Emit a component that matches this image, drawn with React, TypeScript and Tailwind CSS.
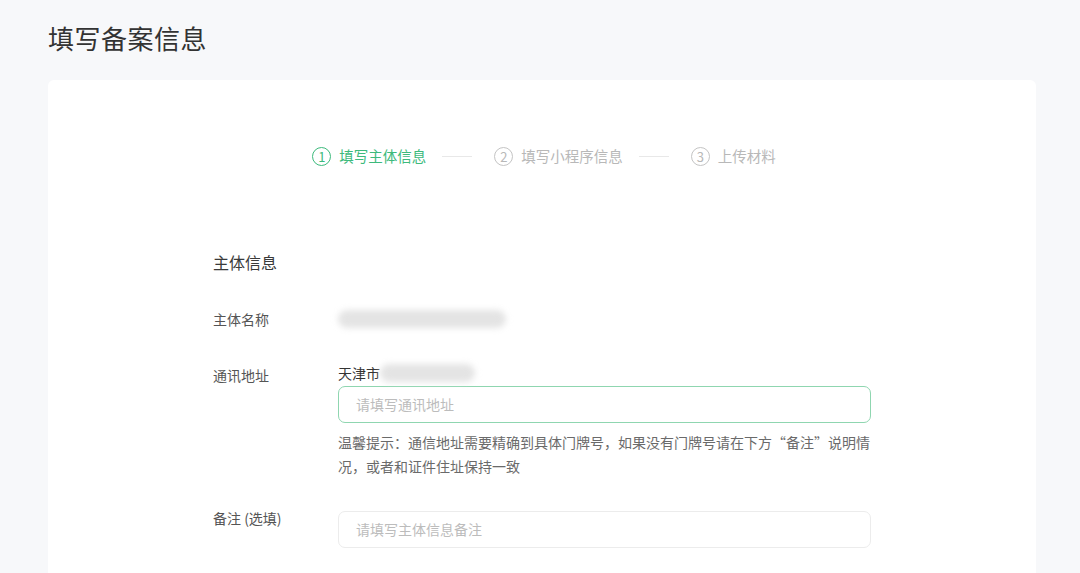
const font = { fontFamily: '"Noto Sans CJK SC", "Noto Sans", sans-serif' };

function Step({ n, label, active }: { n: string; label: string; active?: boolean }) {
  return (
    <div className={`flex items-center gap-[8px] ${active ? 'text-[#3dba7c]' : 'text-[#b8b8b8]'}`}>
      <span
        className={`w-[19px] h-[19px] rounded-full border-[1.5px] flex items-center justify-center text-[13px] leading-none ${
          active ? 'border-[#3dba7c]' : 'border-[#c4c4c4]'
        }`}
      >
        {n}
      </span>
      <span className="text-[14.5px] leading-[20px]">{label}</span>
    </div>
  );
}

function Line() {
  return <div className="w-[30px] h-px bg-[#e8e8e8] ml-[16px] mr-[22px]" />;
}

function Blur({ w }: { w: number }) {
  return <div className="h-[18px] rounded-full bg-[#e4e4e4] blur-[3px]" style={{ width: w }} />;
}

export default function App() {
  return (
    <div className="min-h-[573px] bg-[#f7f8fa] pl-[48px] pr-[44px] pt-[20px] overflow-hidden" style={font}>
      <h1 className="text-[26px] leading-[36px] text-[#333] tracking-[0.5px]">填写备案信息</h1>

      <div className="mt-[24px] bg-white rounded-[6px] h-[520px] pt-[66px]">
        {/* Steps */}
        <div className="flex items-center justify-center pl-[4px]">
          <Step n="1" label="填写主体信息" active />
          <Line />
          <Step n="2" label="填写小程序信息" />
          <Line />
          <Step n="3" label="上传材料" />
        </div>

        {/* Form */}
        <div className="pl-[165px] mt-[85px] text-[14px] text-[#555]">
          <div className="text-[16px] leading-[22px] text-[#3a3a3a]">主体信息</div>

          <div className="flex items-center mt-[35px] h-[22px]">
            <div className="w-[125px]">主体名称</div>
            <Blur w={168} />
          </div>

          <div className="flex mt-[34px]">
            <div className="w-[125px] leading-[22px]">通讯地址</div>
            <div className="w-[533px]">
              <div className="flex items-center h-[22px] -mt-[2px] text-[#333]">
                <span>天津市</span>
                <Blur w={95} />
              </div>
              <div className="mt-[2px] h-[37px] rounded-[7px] border border-[#8fd6b0] flex items-center px-[17px] text-[#bcbcbc]">
                请填写通讯地址
              </div>
              <p className="mt-[7px] leading-[24px] text-[#6a6a6a]">
                温馨提示：通信地址需要精确到具体门牌号，如果没有门牌号请在下方“备注”说明情况，或者和证件住址保持一致
              </p>
            </div>
          </div>

          <div className="flex mt-[33px]">
            <div className="w-[125px] leading-[22px] -mt-[4px]">备注 (选填)</div>
            <div className="w-[533px] h-[37px] rounded-[7px] border border-[#ececec] flex items-center px-[17px] text-[#bcbcbc]">
              请填写主体信息备注
            </div>
          </div>
        </div>
      </div>
    </div>
  );
}
